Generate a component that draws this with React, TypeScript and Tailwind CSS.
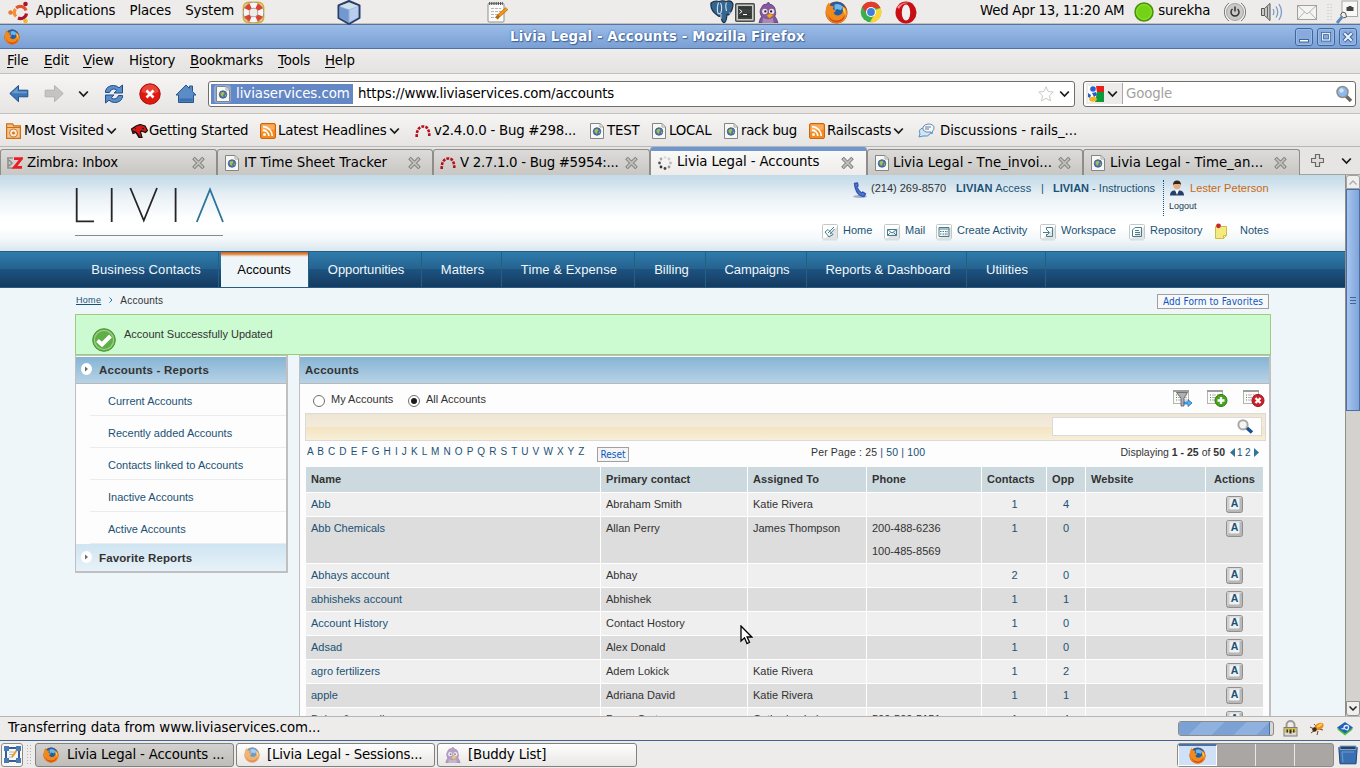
import React from "react";

type P = { className?: string };

const Firefox = ({ size = 16, faded = false }: { size?: number; faded?: boolean }) => (
  <svg width={size} height={size} viewBox="0 0 16 16" className={faded ? "shrink-0 opacity-60" : "shrink-0"}>
    <circle cx="8" cy="8" r="7.6" fill="#b8420a" />
    <circle cx="8.3" cy="7" r="6.4" fill="#1f5fa8" />
    <path d="M6.500 2.500Q10 1 12.500 4L11 6.500 8.500 5.500 6.800 6.500z" fill="#6fb7e8" />
    <path d="M.6 6Q.7 3 2.600 1L4 3.400l2.200.2L5.400 5.600l2.300 1.300L6 8.200q.6 2 3 1.800 3-.3 3.500-3.300L11.800 3.400Q15.400 4.600 15.400 9q-.6 6.400-7.400 6.600Q1 15 .6 8z" fill="#f08a1c" />
    <path d="M2 9q1.500 4.500 6 4.600 4 0 6-4.200-.5 5-5.800 5.600Q3 14.600 2 9z" fill="#d9480f" />
    <path d="M12.800 4.200q2.200 2.600 1.200 6-.4-3-1.600-4z" fill="#ffd54a" />
  </svg>
);

const PageIcon = ({ className = "" }: P) => (
  <svg width="14" height="16" viewBox="0 0 14 16" className={`shrink-0 ${className}`}>
    <path d="M.5.5h9.500l3.500 3.500v11.500H.5z" fill="#f7f7f7" stroke="#85857f" />
    <path d="M10 .5v3.500h3.500z" fill="#fff" stroke="#a5a59f" />
    <circle cx="7" cy="8.500" r="3.800" fill="#4a74ad" stroke="#35547f" strokeWidth=".7" />
    <path d="M5 6.500l2.500-.8 1 2-1.500 1.300.4 2-2-.9-1-2z" fill="#a9bd4c" />
    <path d="M9 8.500l1.300.5-1 2z" fill="#a9bd4c" />
  </svg>
);

const Rss = () => (
  <svg width="16" height="16" viewBox="0 0 16 16" className="shrink-0">
    <rect x=".5" y=".5" width="15" height="15" rx="1.500" fill="#f58a1f" stroke="#c9660e" />
    <path d="M1.500 1.500h13v5q-6 0-13 3z" fill="#faac5a" />
    <circle cx="4.500" cy="11.600" r="1.500" fill="#fff" />
    <path d="M3 7.200a6 6 0 0 1 5.800 5.900M3 3.700a9.400 9.400 0 0 1 9.300 9.400" fill="none" stroke="#fff" strokeWidth="1.700" />
  </svg>
);

const RedArc = () => (
  <svg width="16" height="14" viewBox="0 0 16 14" className="shrink-0">
    <path d="M1.700 13Q1.500 3 8 2.500T14.300 13" fill="none" stroke="#b3121a" strokeWidth="2.600" strokeDasharray="2.800 1.200" />
  </svg>
);

const Chevron = ({ className = "" }: P) => (
  <svg width="11" height="8" viewBox="0 0 11 8" className={`shrink-0 ${className}`}>
    <path d="M1.200 1.500L5.500 6l4.300-4.500" fill="none" stroke="#1a1a1a" strokeWidth="1.800" />
  </svg>
);

const TabX = () => (
  <svg width="13" height="12" viewBox="0 0 13 12" className="shrink-0">
    <path d="M1.500 1l10 10M11.500 1l-10 10" stroke="#777874" strokeWidth="3.600" />
    <path d="M2 1.500l9 9M11 1.500l-9 9" stroke="#bfbfba" strokeWidth="1.900" />
  </svg>
);

const Pidgin = ({ size = 20, faded = false }: { size?: number; faded?: boolean }) => (
  <svg width={size} height={size} viewBox="0 0 20 20" className={faded ? "shrink-0 opacity-55" : "shrink-0"}>
    <path d="M1 20q1-5 2.500-6Q.5 9 3.500 5 4.500 2 8 2l2-2 1 2q5 1 5.500 6 1 3-.5 5.500 2 2.500 3 6.500z" fill="#86599f" stroke="#5b3a72" strokeWidth=".8" />
    <path d="M5 15q5 3 9 0l1 5H4z" fill="#a58bb5" />
    <circle cx="6.500" cy="9" r="2.600" fill="#e9e2ee" />
    <circle cx="13" cy="9" r="2.600" fill="#e9e2ee" />
    <circle cx="7" cy="9" r="1.100" fill="#222" />
    <circle cx="12.500" cy="9" r="1.100" fill="#222" />
    <path d="M8 13l3-2 4 1.500-4 3z" fill="#f5a623" stroke="#b86e0b" strokeWidth=".5" />
  </svg>
);

const TopPanel = () => (
  <div className="flex h-[25px] shrink-0 items-center border-b border-[#5b7396] bg-[#edeceb] shadow-[inset_0_-1px_0_#c2c1bf]">
    <svg width="22" height="23" viewBox="0 0 22 23" className="ml-[8px] shrink-0">
      <path d="M8.200 7A6 6 0 0 1 18 9.500" fill="none" stroke="#e0552b" strokeWidth="3.200" />
      <path d="M18.500 12.500A6 6 0 0 1 10 17" fill="none" stroke="#a8172a" strokeWidth="3.200" />
      <path d="M8 15.500A6 6 0 0 1 7.500 8" fill="none" stroke="#f0913a" strokeWidth="3.200" />
      <circle cx="17.500" cy="3" r="2.300" fill="#a8172a" />
      <circle cx="2.600" cy="11.500" r="2.300" fill="#ec7a32" />
      <circle cx="17.500" cy="20" r="2.300" fill="#f4b62a" />
    </svg>
    <span className="-mt-[2px] ml-[6px] w-[94px]">Applications</span>
    <span className="-mt-[2px] w-[56px]">Places</span>
    <span className="-mt-[2px] w-[57px]">System</span>
    <svg width="23" height="23" viewBox="0 0 23 23" className="shrink-0">
      <rect x="1.500" y="1.500" width="20" height="20" rx="5" fill="none" stroke="#d5b12d" strokeWidth="1.800" />
      <circle cx="11.500" cy="11.500" r="7.300" fill="none" stroke="#8b8b87" strokeWidth="6.600" />
      <circle cx="11.500" cy="11.500" r="7.300" fill="none" stroke="#f6f6f4" strokeWidth="5.200" />
      <circle cx="11.500" cy="11.500" r="7.300" fill="none" stroke="#e0402f" strokeWidth="5.200" strokeDasharray="5.200 6.270" strokeDashoffset="-3" />
    </svg>
    <svg width="26" height="25" viewBox="0 0 26 25" className="ml-[71px] shrink-0">
      <path d="M2.500 5.500L13 1l10.500 4.500v12.500l-10.500 6-10.500-6z" fill="#8fb2de" stroke="#2c3f6b" strokeWidth="2" strokeLinejoin="round" />
      <path d="M3.500 6L13 2.500 22.500 6 13 9.500z" fill="#cfe0e8" />
      <path d="M13.500 10l8.800-3.500v10.700l-8.800 5z" fill="#b9cdee" />
      <path d="M3.500 7l9 3v12l-9-5z" fill="#7398cf" />
    </svg>
    <svg width="23" height="22" viewBox="0 0 23 22" className="ml-[124px] shrink-0">
      <rect x="2" y="2.500" width="16" height="18.500" rx="1" fill="#fbfbfa" stroke="#8e8e89" />
      <path d="M3 2.500h14" stroke="#55565a" strokeWidth="3" strokeDasharray="1.200 1" />
      <path d="M5 7.500h10M5 10.500h10M5 13.500h7M5 16.500h6" stroke="#b6b6b2" strokeDasharray="3 1" />
      <path d="M21 7.500L12.500 15l-2 2.500" stroke="#b96a09" strokeWidth="3.500" />
      <path d="M21 7.500L13 14.500" stroke="#f79a1d" strokeWidth="2.300" />
    </svg>
    <svg width="24" height="24" viewBox="0 0 24 24" className="ml-[201px] shrink-0">
      <path d="M1 3q4-3 8-1.500Q13 0 16 1.500q5-2 7 2.500 0 6-4 10.500-1.500 1-2-.5-.5 8-2.500 8.500-3 .5-3.500-7-2 2-4-.5Q0 10 1 3z" fill="#336791" stroke="#1c2f45" strokeWidth="1.200" />
      <path d="M8.500 2.500q-2 6-.5 11 1.500 1 3-1 1.500-6-.5-9.500M16.500 2.500q-1.500 3 0 8.500M19 13l4 .2M11 14v5" fill="none" stroke="#d5e1ee" strokeWidth="1.100" />
    </svg>
    <svg width="20" height="19" viewBox="0 0 20 19" className="ml-[1px] shrink-0">
      <rect x=".7" y=".7" width="18.600" height="17.600" rx="1" fill="#c9cbc7" stroke="#4a4c49" strokeWidth="1.400" />
      <rect x="3" y="3" width="14" height="13" fill="#3e4240" />
      <path d="M4 5h12M4 11h12M4 13.500h12" stroke="#2c2f2e" />
      <path d="M4.500 6.500L7 8.500l-2.500 2M8 11.500h4" fill="none" stroke="#fff" />
    </svg>
    <div className="ml-[3px]"><Pidgin size={21} /></div>
    <div className="ml-[46px]"><Firefox size={23} /></div>
    <svg width="22" height="22" viewBox="0 0 22 22" className="ml-[12px] shrink-0">
      <circle cx="11" cy="11" r="10.300" fill="#3cae4b" />
      <path d="M2 6A10.300 10.300 0 0 1 20.500 7H11a4 4 0 0 0-3.500 6z" fill="#e13a2e" />
      <path d="M20.700 7A10.300 10.300 0 0 1 10 21.300L14.500 13l.3-4z" fill="#fbd43a" />
      <circle cx="11" cy="11" r="5" fill="#fff" />
      <circle cx="11" cy="11" r="3.900" fill="#3f7fdc" />
    </svg>
    <svg width="22" height="23" viewBox="0 0 22 23" className="ml-[13px] shrink-0">
      <ellipse cx="11" cy="11.500" rx="10.500" ry="11" fill="#c90f16" />
      <ellipse cx="11" cy="11.500" rx="4.200" ry="8" fill="#f2f0ef" />
      <path d="M2 6q6-6 13-4-8-1-11 6z" fill="#f58c86" />
    </svg>
    <span className="-mt-[2px] ml-[63px] w-[155px] whitespace-nowrap tracking-[-0.25px]">Wed Apr 13, 11:20 AM</span>
    <svg width="20" height="20" viewBox="0 0 20 20" className="shrink-0">
      <circle cx="10" cy="10" r="9" fill="#73d216" stroke="#4a9009" strokeWidth="1.500" />
      <circle cx="10" cy="10" r="7.300" fill="none" stroke="#8ee234" />
    </svg>
    <span className="-mt-[2px] ml-[4px] w-[66px]">surekha</span>
    <svg width="22" height="22" viewBox="0 0 22 22" className="shrink-0">
      <path d="M5 2a11 11 0 0 0 0 18M17 2a11 11 0 0 1 0 18" fill="none" stroke="#777" />
      <circle cx="11" cy="11" r="8.500" fill="#c9c9c6" stroke="#a5a5a2" />
      <path d="M8.500 8a4 4 0 1 0 5 0M11 5.500v5" fill="none" stroke="#333" strokeWidth="1.500" />
    </svg>
    <svg width="24" height="22" viewBox="0 0 24 22" className="ml-[14px] shrink-0">
      <path d="M1.500 7.500h3l5.500-5v17l-5.500-5h-3z" fill="#c8c8c5" stroke="#555" />
      <path d="M4.500 7.500v7M7.500 5.500v11" stroke="#666" />
      <path d="M13 8q1.800 3 0 6M16 5.500q3.500 5.500 0 11M19 3q5 8 0 16" fill="none" stroke="#7d9cc8" strokeWidth="1.300" />
    </svg>
    <svg width="20" height="15" viewBox="0 0 20 15" className="ml-[13px] shrink-0">
      <rect x=".5" y=".5" width="19" height="14" fill="#f4f4f3" stroke="#a0a09c" />
      <path d="M1 1l9 8 9-8M1 14l6.500-7M19 14l-6.500-7" fill="none" stroke="#b3b3af" />
    </svg>
    <svg width="34" height="24" viewBox="0 0 34 24" className="ml-[9px] shrink-0">
      <path d="M2 4v18M5 4v18" stroke="#bdbcba" strokeDasharray="1 2" />
      <rect x="16" y="1" width="15.500" height="15.500" fill="#f8f8f7" stroke="#a6a6a2" />
      <path d="M20.500 11V7h2V6h3v1h2v4z" fill="#444" />
      <path d="M11 23l5-6" stroke="#5b8bc4" strokeWidth="3" />
      <path d="M14.500 15l3 3 3-1-1-4-3-1z" fill="#eee" stroke="#555" />
    </svg>
  </div>
);

const WinBtn = ({ children }: { children: React.ReactNode }) => (
  <svg width="18" height="18" viewBox="0 0 18 18" className="shrink-0">
    <rect x=".5" y=".5" width="17" height="17" rx="2.500" fill="#86abdc" stroke="#3f659c" />
    <rect x="1.500" y="1.500" width="15" height="15" rx="1.500" fill="none" stroke="#a3c1e8" strokeOpacity=".7" />
    {children}
  </svg>
);

const TitleBar = () => (
  <div className="flex h-[24px] shrink-0 items-center border-b border-[#4d72a6] bg-linear-to-b from-[#9bbce8] to-[#7a9fd3] pl-[4px] pr-[3px]">
    <Firefox size={16} />
    <span className="ml-[490px] text-[13.333px] font-bold tracking-[0.14px] text-white [text-shadow:0_0_2px_#2f5796,1px_1px_1px_#3f689f]">
      Livia Legal - Accounts - Mozilla Firefox
    </span>
    <div className="ml-auto flex gap-[4px]">
      <WinBtn><rect x="4.500" y="11.500" width="9" height="2.500" fill="#fff" stroke="#3f659c" /></WinBtn>
      <WinBtn>
        <rect x="5.500" y="5.500" width="7" height="6.500" fill="none" stroke="#3f659c" strokeWidth="3" />
        <rect x="5.500" y="5.500" width="7" height="6.500" fill="none" stroke="#e6eefa" strokeWidth="1.300" />
      </WinBtn>
      <WinBtn>
        <path d="M5 5l8 8M13 5l-8 8" stroke="#3f659c" strokeWidth="4" />
        <path d="M5.300 5.300l7.400 7.400M12.700 5.300l-7.400 7.400" stroke="#eef4fd" strokeWidth="2" />
      </WinBtn>
    </div>
  </div>
);

const menu = [
  ["", "F", "ile", "w-[37px]"],
  ["", "E", "dit", "w-[39px]"],
  ["", "V", "iew", "w-[46px]"],
  ["Hi", "s", "tory", "w-[61px]"],
  ["", "B", "ookmarks", "w-[88px]"],
  ["", "T", "ools", "w-[47px]"],
  ["", "H", "elp", "w-[40px]"],
];

const MenuBar = () => (
  <div className="flex h-[25px] shrink-0 items-center border-b border-[#c3c1bf] bg-linear-to-b from-[#eeedec] to-[#e4e3e1] pl-[7px]">
    {menu.map(([a, u, b, w]) => (
      <span key={u + b} className={`${w} shrink-0`}>
        {a}<span className="underline underline-offset-2">{u}</span>{b}
      </span>
    ))}
  </div>
);

const NavBar = () => (
  <div className="flex h-[40px] shrink-0 items-center border-b border-[#c3c1bf] bg-linear-to-b from-[#f6f5f4] to-[#e6e5e3]">
    <svg width="20" height="20" viewBox="0 0 20 20" className="ml-[9px] shrink-0">
      <path d="M.8 9.500L9.500 1.500v4.700h9.300v6.600H9.500v4.900z" fill="#3f76b8" stroke="#20508d" strokeLinejoin="round" />
      <path d="M2.500 9.300L8.500 3.800v3.600h9.300v1.900z" fill="#6c9bd0" />
    </svg>
    <svg width="20" height="20" viewBox="0 0 20 20" className="ml-[15px] shrink-0">
      <path d="M19.200 9.500L10.500 1.500v4.700H1.200v6.600h9.300v4.900z" fill="#c4c4c2" stroke="#b3b3b1" strokeLinejoin="round" />
    </svg>
    <Chevron className="ml-[14px]" />
    <svg width="20" height="20" viewBox="0 0 20 20" className="ml-[15px] shrink-0">
      <path d="M1.500 8.500V7Q3 1.500 9.500 1.500q3 0 5.500 2.300L18.500 1v8H10l2.700-2.700Q11 4.800 9 5 6.500 5.500 5.500 8.500z" fill="#5b8dc9" stroke="#1d4d8c" strokeLinejoin="round" />
      <path d="M18.500 11.500V13q-1.500 5.500-8 5.500-3 0-5.500-2.300L1.500 19v-8H10l-2.700 2.700Q9 15.200 11 15q2.500-.5 3.500-3.500z" fill="#5b8dc9" stroke="#1d4d8c" strokeLinejoin="round" />
    </svg>
    <svg width="22" height="22" viewBox="0 0 22 22" className="ml-[15px] shrink-0">
      <circle cx="11" cy="11" r="10.200" fill="#e0190f" stroke="#a40d08" />
      <path d="M2.500 9a8.500 7.500 0 0 1 17 0q-8 4-17 0z" fill="#ee5548" fillOpacity=".7" />
      <path d="M7.500 7.500l7 7M14.500 7.500l-7 7" stroke="#fff" strokeWidth="2.600" />
    </svg>
    <svg width="22" height="20" viewBox="0 0 22 20" className="ml-[14px] shrink-0">
      <path d="M1 11L11 1l3.500 3.500V2h3v5.500L21 11h-2.500v7.500h-15V11z" fill="#5a8cc6" stroke="#27568f" strokeLinejoin="round" />
      <path d="M4.500 17.500h13v-3h-13z" fill="#3a6fae" />
    </svg>
    <div className="ml-[11px] flex h-[26px] w-[867px] shrink-0 items-center rounded-[3px] border border-[#6f6e6b] bg-white">
      <div className="ml-[2px] flex h-[20px] w-[142px] items-center bg-[#6487c6] text-white">
        <div className="ml-[3px] flex h-[18px] w-[17px] items-center justify-center rounded-[3px] bg-[#8fa9d6]"><PageIcon /></div>
        <span className="ml-[5px] whitespace-nowrap tracking-[-0.05px]">liviaservices.com</span>
      </div>
      <span className="ml-[5px]">https://www.liviaservices.com/accounts</span>
      <svg width="16" height="16" viewBox="0 0 16 16" className="ml-auto shrink-0">
        <path d="M8 .8l2.200 4.700 5 .6-3.700 3.500 1 5.300L8 12.300l-4.500 2.600 1-5.300L.8 6.100l5-.6z" fill="#fff" stroke="#c9c9c7" />
      </svg>
      <Chevron className="ml-[5px] mr-[4px]" />
    </div>
    <div className="ml-[8px] flex h-[26px] w-[273px] shrink-0 items-center rounded-[3px] border border-[#6f6e6b] bg-white">
      <div className="ml-[2px] flex h-[21px] w-[37px] items-center border-r border-[#a9a8a6] bg-[#edeceb] pl-[2px]">
        <svg width="16" height="16" viewBox="0 0 16 16" className="shrink-0">
          <path d="M0 0h8v16H0z" fill="#fff" />
          <path d="M8 0h8v6H9z" fill="#e8221a" /><path d="M9 6h7v10H7z" fill="#0e9a3c" />
          <circle cx="5" cy="3" r="2.800" fill="#2a5fd0" /><path d="M4 7l4-1 1 3-3 2z" fill="#2a5fd0" /><path d="M0 7l3 2-1 3-2-1z" fill="#2a5fd0" />
          <ellipse cx="5" cy="13.300" rx="3.800" ry="2.500" fill="#f6b21b" />
        </svg>
        <Chevron className="ml-[3px]" />
      </div>
      <span className="ml-[3px] text-[#a3a2a0]">Google</span>
      <svg width="18" height="18" viewBox="0 0 18 18" className="ml-auto mr-[2px] shrink-0">
        <path d="M11 11l5 5" stroke="#6a6a68" strokeWidth="3.500" />
        <circle cx="7.500" cy="7" r="5.500" fill="#8db9ec" stroke="#8e8e8b" strokeWidth="1.500" />
        <circle cx="6.500" cy="5.500" r="2.200" fill="#cfe3f9" />
      </svg>
    </div>
  </div>
);

const BookmarksBar = () => (
  <div className="flex h-[33px] shrink-0 items-center border-b border-[#b9b7b5] bg-linear-to-b from-[#f6f5f4] to-[#e6e5e3] pl-[6px] pt-px">
    <svg width="15" height="16" viewBox="0 0 15 16" className="mt-px shrink-0">
      <path d="M.6 15.400V.8h6l1 2h6.800v12.600z" fill="#f3c48d" stroke="#cf6f13" strokeWidth="1.200" />
      <path d="M1 4.500h13" stroke="#cf6f13" />
      <circle cx="7.500" cy="10" r="4" fill="#fbeddc" stroke="#d57a22" />
      <circle cx="7.500" cy="10" r="1.600" fill="#d57a22" />
    </svg>
    <span className="ml-[3px] w-[82px] whitespace-nowrap tracking-[-0.1px]">Most Visited</span>
    <Chevron />
    <svg width="17" height="14" viewBox="0 0 17 14" className="ml-[14px] shrink-0">
      <path d="M.5 5L5 2l4-1.500 5 1.500 2.500 4.500-2 2-4-1.500-1 1 1.500 5.500H8l-3-5-3 1z" fill="#d91414" stroke="#111" strokeWidth="1.200" />
      <path d="M2 7l3 1 4 5M3 3l2 2M11 4l2 1" stroke="#111" fill="none" />
    </svg>
    <span className="ml-[1px] w-[111px] whitespace-nowrap tracking-[-0.25px]">Getting Started</span>
    <Rss />
    <span className="ml-[2px] w-[111px] whitespace-nowrap">Latest Headlines</span>
    <Chevron />
    <div className="ml-[15px]"><RedArc /></div>
    <span className="ml-[3px] w-[156px] whitespace-nowrap tracking-[-0.25px]">v2.4.0.0 - Bug #298...</span>
    <PageIcon />
    <span className="ml-[3px] w-[45px]">TEST</span>
    <PageIcon />
    <span className="ml-[3px] w-[55px]">LOCAL</span>
    <PageIcon />
    <span className="ml-[3px] w-[68px] whitespace-nowrap tracking-[-0.3px]">rack bug</span>
    <Rss />
    <span className="ml-[2px] w-[66px]">Railscasts</span>
    <Chevron />
    <svg width="17" height="16" viewBox="0 0 17 16" className="ml-[14px] shrink-0">
      <path d="M1 14l1-3q-2-5 3-6h6q4 2 1 6-2 3-7 2z" fill="#d5e4f2" stroke="#5b8dbd" />
      <path d="M14 11l-1-2q-6 1-8-2-1-5 5-6 6 0 6 4 0 2-1.500 3z" fill="#f3f8fc" stroke="#5b8dbd" />
      <path d="M7 4h6M7 6h4" stroke="#777" />
    </svg>
    <span className="ml-[5px] whitespace-nowrap tracking-[-0.06px]">Discussions - rails_...</span>
  </div>
);

const Spinner = () => (
  <svg width="14" height="14" viewBox="0 0 14 14" className="shrink-0">
    {[
      [7, 1.500, "#ddd"], [11, 3, "#ccc"], [12.500, 7, "#bbb"], [11, 11, "#999"],
      [7, 12.500, "#444"], [3, 11, "#333"], [1.500, 7, "#555"], [3, 3, "#aaa"],
    ].map(([x, y, c], i) => <circle key={i} cx={x} cy={y} r="1.400" fill={c as string} />)}
  </svg>
);

const Tab = ({ w, icon, text, tw }: { w: string; icon: React.ReactNode; text: string; tw: string }) => (
  <div className={`${w} mt-[2px] flex h-[26px] shrink-0 items-center rounded-t-[3px] border border-b-0 border-[#8e8d8a] bg-linear-to-b from-[#dddbd9] to-[#c9c7c4]`}>
    {icon}
    <span className={`${tw} shrink-0 whitespace-nowrap`}>{text}</span>
    <TabX />
  </div>
);

const TabBar = () => (
  <div className="flex h-[28px] shrink-0 border-b border-[#a5a3a1] bg-[#e6e5e3]">
    <Tab w="w-[217px] pl-[6px]" tw="ml-[4px] w-[165px]" text="Zimbra: Inbox" icon={
      <svg width="16" height="12" viewBox="0 0 16 12" className="shrink-0">
        <path d="M0 1h6M1 1v10h5M2 3l3 3-3 3" stroke="#8f8e8b" strokeWidth="1.600" fill="none" />
        <path d="M7 1.700h7.500L7.500 10.300H15" stroke="#ec1c24" strokeWidth="2.800" fill="none" />
      </svg>} />
    <Tab w="w-[216px] pl-[7px]" tw="ml-[5px] w-[164px] tracking-[-0.05px]" text="IT Time Sheet Tracker" icon={<PageIcon />} />
    <Tab w="w-[217px] pl-[6px]" tw="ml-[4px] w-[165px] tracking-[-0.3px]" text="V 2.7.1.0 - Bug #5954:..." icon={<RedArc />} />
    <div className="flex h-[28px] w-[217px] shrink-0 items-center rounded-t-[3px] border border-b-0 border-t-[4px] border-[#8e8d8a] border-t-[#6f97cf] bg-linear-to-b from-[#f9f9f8] to-[#edeceb] pl-[7px]">
      <Spinner />
      <span className="-mt-[2px] ml-[5px] w-[164px] shrink-0 whitespace-nowrap tracking-[-0.12px]">Livia Legal - Accounts</span>
      <TabX />
    </div>
    <Tab w="w-[216px] pl-[7px]" tw="ml-[4px] w-[165px] tracking-[-0.05px]" text="Livia Legal - Tne_invoi..." icon={<PageIcon />} />
    <Tab w="w-[217px] pl-[7px]" tw="ml-[5px] w-[164px] tracking-[0.02px]" text="Livia Legal - Time_an..." icon={<PageIcon />} />
    <svg width="13" height="13" viewBox="0 0 13 13" className="ml-[11px] mt-[7px] shrink-0">
      <path d="M4.500.5h4v4h4v4h-4v4h-4v-4h-4v-4h4z" fill="#deddda" stroke="#6a6966" strokeWidth="1.200" />
    </svg>
    <Chevron className="ml-[17px] mt-[10px]" />
  </div>
);

const Boxed = ({ children }: { children: React.ReactNode }) => (
  <svg width="16" height="18" viewBox="0 0 16 18" className="mt-[3px] shrink-0">
    <rect x=".5" y=".5" width="15" height="14.500" rx="1" fill="#fff" stroke="#c3c8ca" />
    <path d="M15 3v11.500H3z" fill="#e3e4e5" />
    <path d="M1 16.500h14" stroke="#e3e8eb" />
    <g fill="none" stroke="#46808c">{children}</g>
  </svg>
);

const SiteHeader = () => (
  <div className="flex h-[76px] shrink-0 bg-[linear-gradient(to_bottom,#c3dbe9_0px,#cfe1ec_8px,#e8f0f5_20px,#fdfefe_42px,#ffffff_52px,#f3f8fa_64px,#dae7ee_76px)] pl-[75px]">
    <svg width="150" height="62" viewBox="0 0 150 62" className="shrink-0">
      <path d="M1.700 13v33.300H19M36.700 13v34M55.300 13l13.500 32.500L82 13M100.600 13v34" fill="none" stroke="#262425" strokeWidth="1.800" />
      <path d="M121.800 47L135 14.500 148 47" fill="none" stroke="#2c7499" strokeWidth="1.800" />
      <path d="M0 60.500h148" stroke="#8c898c" />
    </svg>
    <div className="ml-auto mr-[75px] flex w-[448px] flex-col text-[11px] text-[#1a5276]">
      <div className="flex h-[46px] pt-[5px]">
        <svg width="16" height="18" viewBox="0 0 16 18" className="ml-[30px] mt-px shrink-0">
          <ellipse cx="8" cy="15.500" rx="7" ry="1.500" fill="#9fb0c4" />
          <path d="M2.500 2.500l3-.5.500 3-1.200.8q1.200 4 4.700 6.200l1.300-1 2.700 1.800-1.500 2.700Q4 15 2.500 2.500z" fill="#5479dc" stroke="#3456b4" strokeWidth="1.400" strokeLinejoin="round" />
        </svg>
        <span className="ml-[3px] w-[85px] whitespace-nowrap text-[#333]">(214) 269-8570</span>
        <span className="w-[85px] whitespace-nowrap tracking-[0.1px]"><b>LIVIAN</b> Access</span>
        <span className="w-[12px]">|</span>
        <span className="w-[110px] whitespace-nowrap"><b>LIVIAN</b> - Instructions</span>
        <div className="flex h-[36px] border-l border-dotted border-[#1a5276] pl-[5px]">
          <div className="flex flex-col">
            <div className="flex">
              <svg width="16" height="16" viewBox="0 0 16 16" className="shrink-0">
                <path d="M1 15.500q0-4.500 4-5h6q4 .5 4 5z" fill="#27406b" />
                <path d="M6 10l2 5 2-5z" fill="#fff" />
                <circle cx="8" cy="5.500" r="3.700" fill="#e4ae84" />
                <path d="M4 5q0-4.500 4-4.500T12 5l-1-1H5.500z" fill="#3a2215" />
              </svg>
              <span className="ml-[5px] whitespace-nowrap tracking-[0.07px] text-[#c8690f]">Lester Peterson</span>
            </div>
            <span className="mt-[2px] text-[9px] text-[#1b3a52]">Logout</span>
          </div>
        </div>
      </div>
      <div className="flex">
        <Boxed><path d="M3 8l3-2.500 5 5-4 2.500zM6 9l6-6M8 10l4.500-5" /></Boxed>
        <span className="ml-[5px] mt-px w-[41px]">Home</span>
        <Boxed><path d="M3.500 5.500h9v6h-9zM3.500 5.500l4.500 3.500 4.500-3.500M3.500 11.500L6.500 8.500M12.500 11.500l-3-3" /></Boxed>
        <span className="ml-[5px] mt-px w-[31px]">Mail</span>
        <Boxed><path d="M3 3.500h10v9H3zM3 5h10" /><path d="M4 7.500h8M4 10h8" strokeDasharray="1.500 1" /></Boxed>
        <span className="ml-[5px] mt-px w-[83px] whitespace-nowrap">Create Activity</span>
        <Boxed><path d="M6.500 6V3.500h6v9h-6V10M3 8.500h6M7 6l2.500 2.500L7 11" /></Boxed>
        <span className="ml-[5px] mt-px w-[68px]">Workspace</span>
        <Boxed><path d="M6 3.500h6.500v9h-9V6zM6 6.500h4M6 8.500h5M6 10.500h5" /></Boxed>
        <span className="ml-[5px] mt-px w-[64px]">Repository</span>
        <svg width="14" height="17" viewBox="0 0 14 17" className="mt-[2px] shrink-0">
          <path d="M1.500 3.500h11v9l-3 3h-8z" fill="#f5ea7f" stroke="#cdbb4e" />
          <path d="M9.500 15.500v-3h3z" fill="#fdf9c9" stroke="#cdbb4e" />
          <circle cx="4.500" cy="2.800" r="2.400" fill="#c9252c" />
        </svg>
        <span className="ml-[12px] mt-px">Notes</span>
      </div>
    </div>
  </div>
);

const nav: [string, string, boolean?][] = [
  ["Business Contacts", "w-[144px] pr-[1px] tracking-[0.12px]"],
  ["Accounts", "w-[90px]", true],
  ["Opportunities", "w-[113px] pl-[2px] tracking-[-0.08px]"],
  ["Matters", "w-[80px] pl-[2px]"],
  ["Time & Expense", "w-[133px] pl-[2px] tracking-[0.1px]"],
  ["Billing", "w-[71px] pl-[3px]"],
  ["Campaigns", "w-[101px] pl-[2px] tracking-[-0.1px]"],
  ["Reports & Dashboard", "w-[160px] pl-[3px]"],
  ["Utilities", "w-[79px] pl-[2px]"],
];

const SiteNav = () => (
  <div className="flex h-[37px] shrink-0 border-y border-[#265c85] bg-[linear-gradient(to_bottom,#2f7bab_0px,#24628f_17px,#1d5482_17px,#143a5f_35px)] pl-[75px] text-[13px] text-[#f2f6f9]">
    {nav.map(([t, w, on]) =>
      on ? (
        <div key={t} className={`${w} flex shrink-0 border-r border-[#26607f] pl-[2px]`}>
          <div className="flex flex-1 items-center justify-center bg-[linear-gradient(to_bottom,#c8641a_0px,#d98643_2px,#f1d9c6_4px,#eef6fa_5px)] pr-px pt-px text-black">{t}</div>
        </div>
      ) : (
        <div key={t} className={`${w} flex shrink-0 items-center justify-center whitespace-nowrap border-r border-[#26607f] pt-px`}>{t}</div>
      ),
    )}
  </div>
);

const Bullet = () => (
  <svg width="11" height="12" viewBox="0 0 11 12" className="-mt-px shrink-0">
    <ellipse cx="5.500" cy="6" rx="5.500" ry="6" fill="#fff" />
    <path d="M4 3.500L7 6 4 8.500z" fill="#6d6a68" />
  </svg>
);

const reports = ["Current Accounts", "Recently added Accounts", "Contacts linked to Accounts", "Inactive Accounts", "Active Accounts"];

const Sidebar = () => (
  <div className="flex h-[218px] w-[213px] shrink-0 flex-col border-b-2 border-l border-r-2 border-t border-[#c0c0c0] bg-[#fdfdfd] pt-px">
    <div className="flex h-[27px] shrink-0 items-center border-b border-[#b9b9b9] bg-linear-to-b from-[#86b4d4] to-[#b7d3e6] pb-px pl-[5px] text-[11.5px] font-bold text-[#333]">
      <Bullet /><span className="ml-[7px] tracking-[0.22px]">Accounts - Reports</span>
    </div>
    <div className="flex flex-col text-[11px] text-[#1a5276]">
      {reports.map((r) => (
        <div key={r} className="ml-[14px] flex h-[32px] items-center border-b border-[#eaebec] pl-[18px] pt-[2px]">{r}</div>
      ))}
    </div>
    <div className="flex flex-1 items-center bg-linear-to-b from-[#cfe5f1] to-[#e8f1f8] pl-[5px] text-[11.5px] font-bold text-[#333]">
      <Bullet /><span className="ml-[7px] tracking-[0.12px]">Favorite Reports</span>
    </div>
  </div>
);

const ListBase = () => (
  <>
    <rect x=".5" y=".5" width="15" height="13" fill="#fafafa" stroke="#b4b4b2" />
    <path d="M0 1h16" stroke="#9d9d9b" strokeWidth="2" />
    <path d="M3 5h1M3 7.500h1M3 10h1" stroke="#4e9a3c" />
    <path d="M5 5h4M5 7.500h4M5 10h4M11 5h3M11 7.500h3M11 10h3" stroke="#b5b5bf" />
    <path d="M10 5h1M10 8h1" stroke="#e27b2b" />
  </>
);

const ActionIcon = () => (
  <svg width="17" height="17" viewBox="0 0 17 17" className="shrink-0">
    <rect x=".5" y=".5" width="16" height="16" rx="2" fill="#b7b7b7" stroke="#8f8f8f" />
    <path d="M1 1l3 2h9l3-2z" fill="#dcdcdc" />
    <path d="M1 1l3 2v10l-3 2z" fill="#cfcfcf" />
    <rect x="3.500" y="2.500" width="10" height="11" rx="1" fill="#f1f1f1" />
    <text x="8.500" y="11.300" textAnchor="middle" fontFamily="Liberation Sans" fontWeight="bold" fontSize="10.500" fill="#1a5276">A</text>
  </svg>
);

type Row = { n: string; c: string; a?: string; p?: string[]; k: number; o: number };
const rows: Row[] = [
  { n: "Abb", c: "Abraham Smith", a: "Katie Rivera", k: 1, o: 4 },
  { n: "Abb Chemicals", c: "Allan Perry", a: "James Thompson", p: ["200-488-6236", "100-485-8569"], k: 1, o: 0 },
  { n: "Abhays account", c: "Abhay", k: 2, o: 0 },
  { n: "abhisheks account", c: "Abhishek", k: 1, o: 1 },
  { n: "Account History", c: "Contact Hostory", k: 1, o: 0 },
  { n: "Adsad", c: "Alex Donald", k: 1, o: 0 },
  { n: "agro fertilizers", c: "Adem Lokick", a: "Katie Rivera", k: 1, o: 2 },
  { n: "apple", c: "Adriana David", a: "Katie Rivera", k: 1, o: 1 },
  { n: "Baker & mccully", c: "Dawn Carter", a: "Catherine Lake", p: ["500-500-5151"], k: 1, o: 4 },
];
const heads = ["Name", "Primary contact", "Assigned To", "Phone", "Contacts", "Opp", "Website", "Actions"];

const Table = () => (
  <div className="ml-[6px] flex w-[957px] flex-col gap-px bg-white text-[11px] leading-[23px] text-[#333]">
    <div className="grid grid-cols-[294px_146px_118px_114px_64px_38px_119px_57px] gap-x-px">
      {heads.map((h) => (
        <div key={h} className="h-[25px] bg-[#ccd9df] pl-[5px] font-bold leading-[25px] tracking-[0.08px] last:pl-[8px]">{h}</div>
      ))}
    </div>
    {rows.map((r, i) => {
      const bg = i % 2 ? "bg-[#dddddd]" : "bg-[#efefef]";
      return (
        <div key={r.n} className={`grid grid-cols-[294px_146px_118px_114px_64px_38px_119px_57px] gap-x-px ${r.p && r.p.length > 1 ? "h-[46px]" : "h-[23px]"}`}>
          <div className={`${bg} pl-[5px] text-[#1a5276]`}>{r.n}</div>
          <div className={`${bg} pl-[5px]`}>{r.c}</div>
          <div className={`${bg} pl-[5px]`}>{r.a}</div>
          <div className={`${bg} pl-[5px]`}>{r.p?.map((x) => <div key={x}>{x}</div>)}</div>
          <div className={`${bg} pl-px text-center text-[#1a5276]`}>{r.k}</div>
          <div className={`${bg} text-center text-[#1a5276]`}>{r.o}</div>
          <div className={bg} />
          <div className={`${bg} flex justify-center pt-[3px]`}><ActionIcon /></div>
        </div>
      );
    })}
  </div>
);

const MainPanel = () => (
  <div className="ml-[11px] flex h-[400px] w-[972px] shrink-0 flex-col border-l border-r-2 border-t border-[#c0c0c0] bg-[#fdfdfd] pt-px">
    <div className="flex h-[27px] shrink-0 items-center border-b border-[#b9b9b9] bg-linear-to-b from-[#86b4d4] to-[#b7d3e6] pb-px pl-[5px] text-[11.5px] font-bold tracking-[0.22px] text-[#333]">Accounts</div>
    <div className="flex h-[29px] shrink-0 items-center pl-[13px] text-[11px] text-[#333]">
      <div className="mt-[4px] h-[12px] w-[12px] rounded-full border border-[#6f6f6c] bg-white" />
      <span className="ml-[6px] w-[77px]">My Accounts</span>
      <div className="mt-[4px] flex h-[12px] w-[12px] items-center justify-center rounded-full border border-[#6f6f6c] bg-white">
        <div className="h-[6px] w-[6px] rounded-full bg-[#1c1c1c]" />
      </div>
      <span className="ml-[6px]">All Accounts</span>
      <svg width="20" height="17" viewBox="0 0 20 17" className="ml-auto shrink-0">
        <ListBase />
        <path d="M3.500 2.500h11L11 8v8H8V8z" fill="#aeb0b3" stroke="#55575b" strokeWidth=".8" />
        <path d="M11 12h4v-2.500l4 3.500-4 3.500V14h-4z" fill="#58b0ef" stroke="#1c6fb5" strokeWidth=".8" />
      </svg>
      <svg width="21" height="17" viewBox="0 0 21 17" className="ml-[14px] shrink-0">
        <ListBase />
        <circle cx="14" cy="10.500" r="6" fill="#48a51b" stroke="#2a7a08" />
        <path d="M10.500 10.500h7M14 7v7" stroke="#fff" strokeWidth="2.300" />
      </svg>
      <svg width="22" height="17" viewBox="0 0 22 17" className="ml-[15px] mr-[4px] shrink-0">
        <ListBase />
        <circle cx="15" cy="10.500" r="6" fill="#cc2128" stroke="#96141a" />
        <path d="M12.500 8l5 5M17.500 8l-5 5" stroke="#fff" strokeWidth="2.300" />
      </svg>
    </div>
    <div className="ml-[5px] flex h-[28px] w-[961px] shrink-0 items-center justify-end border border-[#dadada] bg-[linear-gradient(to_bottom,#efe5d3_0px,#f3ebdc_13px,#f3e4c1_13px,#f8efd8_26px)] pb-px pr-[3px]">
      <div className="flex h-[19px] w-[210px] items-center justify-end border border-[#dadada] bg-white pr-[7px]">
        <svg width="17" height="15" viewBox="0 0 17 15" className="shrink-0">
          <circle cx="6" cy="5.800" r="4.600" fill="#f4f4f4" stroke="#a9a9a9" strokeWidth="2" />
          <path d="M10 9l5 4.500" stroke="#174f8d" strokeWidth="3.500" />
        </svg>
      </div>
    </div>
    <div className="flex h-[26px] shrink-0 pl-[7px] text-[10px] text-[#1a5276]">
      <div className="flex w-[290px] pt-[3px]">
        <span className="whitespace-nowrap tracking-[0.67px]">A B C D E F G H I J K L M N O P Q R S T U V W X Y Z</span>
      </div>
      <div className="mt-[6px] flex h-[15px] w-[32px] items-center justify-center border border-[#a0a0a0] bg-[#f4f4f4] pt-px font-['DejaVu_Sans_Condensed','DejaVu_Sans',sans-serif] text-[10px] tracking-normal text-[#0b56c4]">Reset</div>
      <span className="ml-[182px] whitespace-nowrap pt-[3px] text-[10.500px] tracking-[0.15px] text-[#1a5276]"><span className="text-[#333]">Per Page : 25</span> | 50 | 100</span>
      <span className="ml-auto pt-[3px] text-[10.500px] text-[#333]">Displaying <b>1 - 25</b> of <b>50</b></span>
      <svg width="5" height="9" viewBox="0 0 5 9" className="ml-[5px] mt-[7px] shrink-0"><path d="M5 0v9L0 4.500z" fill="#2c7499" /></svg>
      <span className="ml-[2px] mt-[4px] w-[8px] text-[10px]">1</span>
      <span className="mt-[4px] w-[9px] text-[10px]">2</span>
      <svg width="5" height="9" viewBox="0 0 5 9" className="mr-[10px] mt-[7px] shrink-0"><path d="M0 0v9l5-4.500z" fill="#2c7499" /></svg>
    </div>
    <Table />
  </div>
);

const Page = () => (
  <div className="flex min-w-0 flex-1 flex-col overflow-hidden bg-[#eef6fa] font-['Liberation_Sans',Arial,sans-serif] tracking-normal">
    <SiteHeader />
    <SiteNav />
    <div className="flex h-[26px] shrink-0 pl-[76px] pr-[76px] text-[9px] text-[#333]">
      <span className="mt-[4px] tracking-[0.3px] text-[#1a5276] underline">Home</span>
      <svg width="4" height="6" viewBox="0 0 4 6" className="ml-[8px] mt-[9px] shrink-0"><path d="M.5.5L3 3 .5 5.500" fill="none" stroke="#2c7499" /></svg>
      <span className="ml-[7px] mt-[5px] text-[10px] tracking-[0.25px]">Accounts</span>
      <div className="ml-auto mt-[6px] flex h-[15px] w-[112px] items-center justify-center whitespace-nowrap border border-[#a0a0a0] bg-[#f8f8f8] pt-px font-['DejaVu_Sans_Condensed','DejaVu_Sans',sans-serif] text-[10px] tracking-[0.1px] text-[#0b56c4]">Add Form to Favorites</div>
    </div>
    <div className="ml-[75px] flex h-[41px] w-[1196px] shrink-0 border border-[#a0cb79] bg-[#ccfbd1] pl-[16px] text-[11px] text-[#333]">
      <svg width="24" height="24" viewBox="0 0 24 24" className="mt-[13px] shrink-0">
        <circle cx="12" cy="12" r="11.300" fill="#5fae48" stroke="#4b9437" />
        <circle cx="12" cy="12" r="9.600" fill="none" stroke="#9bd088" strokeWidth="1.200" />
        <path d="M5.500 12.500l4.500 4L18.500 8" fill="none" stroke="#fff" strokeWidth="4" />
      </svg>
      <span className="ml-[8px] mt-[11px]">Account Successfully Updated</span>
    </div>
    <div className="flex min-h-0 flex-1 pl-[75px]">
      <Sidebar />
      <MainPanel />
    </div>
  </div>
);

const Scrollbar = () => (
  <div className="flex w-[15px] shrink-0 flex-col border-l border-[#8f8e8b] bg-[#d4d2cf]">
    <div className="flex h-[14px] items-center justify-center rounded-t-[3px] border border-[#a3a19e] bg-[#f0efee]">
      <svg width="8" height="5" viewBox="0 0 8 5"><path d="M.5 4.500L4 1l3.500 3.500" fill="none" stroke="#aaa" strokeWidth="1.300" /></svg>
    </div>
    <div className="flex h-[222px] flex-col items-center justify-center gap-[2px] border border-[#4a6fa5] bg-linear-to-r from-[#a7c5ee] to-[#7fa5da]">
      <div className="h-px w-[6px] bg-[#3f659c]" /><div className="h-px w-[6px] bg-[#3f659c]" /><div className="h-px w-[6px] bg-[#3f659c]" />
    </div>
    <div className="mt-auto flex h-[15px] items-center justify-center rounded-b-[3px] border border-[#8f8e8b] bg-[#f0efee]">
      <svg width="8" height="5" viewBox="0 0 8 5"><path d="M.5.5L4 4 7.500.5" fill="none" stroke="#222" strokeWidth="1.500" /></svg>
    </div>
  </div>
);

const StatusBar = () => (
  <div className="flex h-[25px] shrink-0 items-center border-b border-t border-b-[#426490] border-t-[#b7b6b4] bg-[#edeceb] pb-px pl-[8px] pr-[6px]">
    <span className="whitespace-nowrap tracking-[-0.08px]">Transferring data from www.liviaservices.com...</span>
    <div className="ml-auto flex h-[15px] w-[96px] rounded-[3px] border border-[#8c8b88] bg-[#d8d7d4]">
      <div className="w-[91px] rounded-l-[2px] border-r border-[#4a6fa5] bg-[repeating-linear-gradient(135deg,#7ca2d5_0px,#7ca2d5_16px,#8fb1df_16px,#8fb1df_32px)]" />
    </div>
    <svg width="15" height="17" viewBox="0 0 14 17" className="ml-[9px] shrink-0">
      <path d="M3 8V5a4 4 0 0 1 8 0v3" fill="none" stroke="#9b9b98" strokeWidth="2" />
      <rect x=".5" y="7.500" width="13" height="8.500" fill="#dcd9cf" stroke="#7f7d77" />
      <path d="M1 9h12M1 11.500h12" stroke="#d3b223" strokeWidth="1.500" />
      <path d="M3 9.500h1.500v3H3zM6 9.500h2v4H6zM9.500 9.500H11v3H9.500z" fill="#333" />
    </svg>
    <svg width="16" height="15" viewBox="0 0 16 15" className="ml-[11px] shrink-0">
      <path d="M1 6l4 2M2 12l4-3M8 14l1-4M5 3l3 3M14 9l-4-1" stroke="#6b4a22" />
      <ellipse cx="10" cy="5.500" rx="5" ry="3.300" transform="rotate(-30 10 5.500)" fill="#f08a24" />
      <ellipse cx="10.500" cy="4.500" rx="3" ry="1.200" transform="rotate(-30 10.500 4.500)" fill="#fbd24b" />
      <circle cx="5.500" cy="8.500" r="2.200" fill="#3b2a1b" />
    </svg>
    <svg width="18" height="15" viewBox="0 0 18 15" className="ml-[11px] shrink-0">
      <path d="M1 7l1 2 7 5.500L16 9l1-2-8 3z" fill="#47c53c" />
      <path d="M1 6.500l8 6 8-6-8-5.500z" fill="#2560b8" />
      <path d="M5.500 7.500q2 1 3-.5M8 7q0-2.500 2.500-2.500T12.500 7 10 8.500 8 7z" stroke="#e6efff" strokeWidth="1.300" fill="none" />
    </svg>
  </div>
);

const Task = ({ active, icon, text, w }: { active?: boolean; icon: React.ReactNode; text: string; w: string }) => (
  <div className={`${w} flex h-[24px] shrink-0 items-center rounded-[3px] border border-[#82817e] pl-[7px] ${active ? "bg-linear-to-b from-[#d3d1ce] to-[#bfbdba]" : "bg-linear-to-b from-[#fefefe] to-[#e8e7e5]"}`}>
    {icon}
    {text}
  </div>
);

const TaskBar = () => (
  <div className="flex h-[27px] shrink-0 items-center bg-[#edeceb] pr-[2px]">
    <div className="ml-[1px] flex h-[24px] w-[22px] items-center justify-center rounded-[3px] border border-[#8c8b88] bg-[#f8f8f7]">
      <svg width="17" height="17" viewBox="0 0 17 17">
        <rect x="2" y="2" width="13" height="13" fill="#f4f6f8" stroke="#315f96" strokeWidth="2" />
        <path d="M0 0h5v5H0zM12 0h5v5h-5zM0 12h5v5H0zM12 12h5v5h-5z" fill="#4a7ab3" />
        <path d="M5 6h5M5 8.500h4M5 11h4" stroke="#b5b5b2" />
        <path d="M12.500 4.500L8 11" stroke="#eb9a1f" strokeWidth="2" />
      </svg>
    </div>
    <svg width="6" height="20" viewBox="0 0 6 20" className="ml-[3px] mr-[3px] shrink-0"><path d="M1.500 0v20M4.500 0v20" stroke="#b3b2b0" strokeDasharray="1 2" /></svg>
    <div className="flex gap-[2px] whitespace-nowrap">
      <Task active w="w-[199px] gap-[8px]" icon={<Firefox />} text="Livia Legal - Accounts ..." />
      <Task w="w-[199px] gap-[7px]" icon={<Firefox faded />} text="[Livia Legal - Sessions..." />
      <Task w="w-[200px] gap-[7px]" icon={<Pidgin size={16} faded />} text="[Buddy List]" />
    </div>
    <div className="ml-auto flex h-[24px] w-[157px] rounded-[3px] border border-[#8c8b88] bg-[#aaa6a3]">
      <div className="flex w-[39px] items-center justify-center border border-t-2 border-white border-t-[#4a6fa5] bg-[#d0e1f7] pr-px"><Firefox size={17} /></div>
      <div className="w-[39px] border-r border-[#e8e7e5]" />
      <div className="w-[39px] border-r border-[#e8e7e5]" />
    </div>
    <svg width="20" height="20" viewBox="0 0 20 20" className="ml-[4px] shrink-0">
      <path d="M.8 2.500h18.400l-1.200 16.300h-16z" fill="#3a70b2" stroke="#1f4777" />
      <path d="M2 1h16v3.500H2z" fill="#27405f" stroke="#7fa6d3" />
      <path d="M4 7l1 10M4 7h12" stroke="#6c9bd0" />
    </svg>
  </div>
);

export default function App() {
  return (
    <div className="relative flex h-[768px] w-[1360px] flex-col overflow-hidden bg-[#edeceb] font-['DejaVu_Sans',sans-serif] text-[13.333px] leading-[16px] tracking-[-0.17px] text-black">
      <TopPanel />
      <TitleBar />
      <MenuBar />
      <NavBar />
      <BookmarksBar />
      <TabBar />
      <div className="flex min-h-0 flex-1">
        <Page />
        <Scrollbar />
      </div>
      <StatusBar />
      <TaskBar />
      <svg width="13" height="20" viewBox="0 0 13 20" className="absolute left-[740px] top-[625px]">
        <path d="M1 1v15l3.500-3.200L7 18.500l2.500-1.200-2.400-5.300h4.700z" fill="#fff" stroke="#000" strokeWidth="1.300" />
      </svg>
    </div>
  );
}
